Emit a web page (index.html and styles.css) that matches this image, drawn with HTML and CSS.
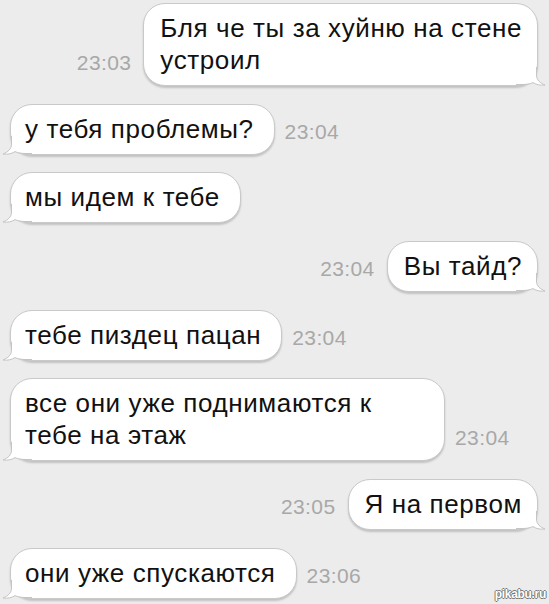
FILE: index.html
```html
<!DOCTYPE html>
<html lang="ru">
<head>
    <meta charset="utf-8">
    <title>Сообщения</title>
    <link rel="stylesheet" href="styles.css">
</head>
<body>
    <div class="chat">
        <div class="row out">
            <span class="time">23:03</span>
            <div class="bubble"><svg class="tail" viewBox="0 0 32 20"><path class="fill" d="M10.5 0 L10.5 8 C10.5 13 7 16 2 18 C7 18.6 11 17.6 14 15.6 C17 17 21 17.5 24 17.5 L31 17.5 L31 0 Z"/><path class="edge" d="M10.5 0 L10.5 8 C10.5 13 7 16 2 18 C7 18.6 11 17.6 14 15.6 C17 17 21 17.5 24 17.5 L31 17.5"/></svg><span class="text">Бля че ты за хуйню на стене<br>устроил</span></div>
        </div>
        <div class="row in">
            <div class="bubble"><svg class="tail" viewBox="0 0 32 20"><path class="fill" d="M10.5 0 L10.5 8 C10.5 13 7 16 2 18 C7 18.6 11 17.6 14 15.6 C17 17 21 17.5 24 17.5 L31 17.5 L31 0 Z"/><path class="edge" d="M10.5 0 L10.5 8 C10.5 13 7 16 2 18 C7 18.6 11 17.6 14 15.6 C17 17 21 17.5 24 17.5 L31 17.5"/></svg><span class="text">у тебя проблемы?</span></div>
            <span class="time">23:04</span>
        </div>
        <div class="row in">
            <div class="bubble"><svg class="tail" viewBox="0 0 32 20"><path class="fill" d="M10.5 0 L10.5 8 C10.5 13 7 16 2 18 C7 18.6 11 17.6 14 15.6 C17 17 21 17.5 24 17.5 L31 17.5 L31 0 Z"/><path class="edge" d="M10.5 0 L10.5 8 C10.5 13 7 16 2 18 C7 18.6 11 17.6 14 15.6 C17 17 21 17.5 24 17.5 L31 17.5"/></svg><span class="text">мы идем к тебе</span></div>
        </div>
        <div class="row out">
            <span class="time">23:04</span>
            <div class="bubble"><svg class="tail" viewBox="0 0 32 20"><path class="fill" d="M10.5 0 L10.5 8 C10.5 13 7 16 2 18 C7 18.6 11 17.6 14 15.6 C17 17 21 17.5 24 17.5 L31 17.5 L31 0 Z"/><path class="edge" d="M10.5 0 L10.5 8 C10.5 13 7 16 2 18 C7 18.6 11 17.6 14 15.6 C17 17 21 17.5 24 17.5 L31 17.5"/></svg><span class="text">Вы тайд?</span></div>
        </div>
        <div class="row in">
            <div class="bubble"><svg class="tail" viewBox="0 0 32 20"><path class="fill" d="M10.5 0 L10.5 8 C10.5 13 7 16 2 18 C7 18.6 11 17.6 14 15.6 C17 17 21 17.5 24 17.5 L31 17.5 L31 0 Z"/><path class="edge" d="M10.5 0 L10.5 8 C10.5 13 7 16 2 18 C7 18.6 11 17.6 14 15.6 C17 17 21 17.5 24 17.5 L31 17.5"/></svg><span class="text">тебе пиздец пацан</span></div>
            <span class="time">23:04</span>
        </div>
        <div class="row in">
            <div class="bubble wide"><svg class="tail" viewBox="0 0 32 20"><path class="fill" d="M10.5 0 L10.5 8 C10.5 13 7 16 2 18 C7 18.6 11 17.6 14 15.6 C17 17 21 17.5 24 17.5 L31 17.5 L31 0 Z"/><path class="edge" d="M10.5 0 L10.5 8 C10.5 13 7 16 2 18 C7 18.6 11 17.6 14 15.6 C17 17 21 17.5 24 17.5 L31 17.5"/></svg><span class="text">все они уже поднимаются к<br>тебе на этаж</span></div>
            <span class="time">23:04</span>
        </div>
        <div class="row out">
            <span class="time">23:05</span>
            <div class="bubble"><svg class="tail" viewBox="0 0 32 20"><path class="fill" d="M10.5 0 L10.5 8 C10.5 13 7 16 2 18 C7 18.6 11 17.6 14 15.6 C17 17 21 17.5 24 17.5 L31 17.5 L31 0 Z"/><path class="edge" d="M10.5 0 L10.5 8 C10.5 13 7 16 2 18 C7 18.6 11 17.6 14 15.6 C17 17 21 17.5 24 17.5 L31 17.5"/></svg><span class="text">Я на первом</span></div>
        </div>
        <div class="row in">
            <div class="bubble"><svg class="tail" viewBox="0 0 32 20"><path class="fill" d="M10.5 0 L10.5 8 C10.5 13 7 16 2 18 C7 18.6 11 17.6 14 15.6 C17 17 21 17.5 24 17.5 L31 17.5 L31 0 Z"/><path class="edge" d="M10.5 0 L10.5 8 C10.5 13 7 16 2 18 C7 18.6 11 17.6 14 15.6 C17 17 21 17.5 24 17.5 L31 17.5"/></svg><span class="text">они уже спускаются</span></div>
            <span class="time">23:06</span>
        </div>
        <div class="mark">pikabu.ru</div>
    </div>
</body>
</html>
```

FILE: styles.css
```css
body {
    margin: 0;
    background-color: #ececec;
    font-family: "Liberation Sans", Arial, sans-serif;
}

.chat {
    position: relative;
    width: 549px;
    height: 604px;
    overflow: hidden;
    box-sizing: border-box;
    padding: 3px 11px 0 10px;
    display: flex;
    flex-direction: column;
    gap: 17.7px;
}

.row {
    display: flex;
    align-items: flex-end;
    gap: 10px;
}

.row.out {
    justify-content: flex-end;
    gap: 12px;
}

.bubble {
    position: relative;
    background-color: #fff;
    border: 1px solid #c9c9c9;
    border-radius: 22px;
    box-shadow: 0 2px 2px rgba(0, 0, 0, 0.18);
    padding: 8px 20px 9px 14px;
    font-size: 26px;
    letter-spacing: 0.6px;
    line-height: 32px;
    color: #111;
    white-space: nowrap;
}

.row.out .bubble {
    padding: 8px 15px 9px 16px;
}

.bubble.wide {
    box-sizing: border-box;
    min-width: 435px;
}

.text {
    position: relative;
}

.tail {
    position: absolute;
    left: -10px;
    bottom: -2px;
    width: 32px;
    height: 20px;
}

.row.out .tail {
    left: auto;
    right: -10px;
    transform: scaleX(-1);
}

.tail .fill {
    fill: #fff;
}

.tail .edge {
    fill: none;
    stroke: #c4c4c4;
    stroke-width: 1;
}

.time {
    font-size: 21px;
    letter-spacing: 0.4px;
    color: #a8a8a8;
    margin-bottom: 11px;
}

.mark {
    position: absolute;
    right: 3px;
    bottom: 3px;
    font-size: 12px;
    font-weight: bold;
    color: #fff;
    letter-spacing: -0.3px;
    text-shadow: 1px 0 0 #777, -1px 0 0 #777, 0 1px 0 #777, 0 -1px 0 #777;
}
```
